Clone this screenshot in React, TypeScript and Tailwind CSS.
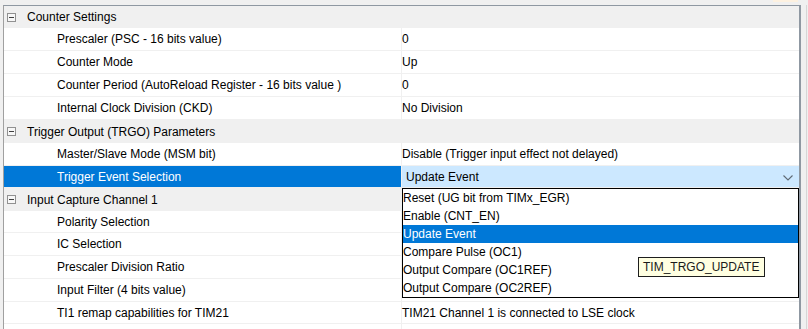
import React from "react";

type Row =
  | { kind: "h"; label: string; h: string }
  | { kind: "p"; label: string; value: string; h: string }
  | { kind: "sel"; label: string; value: string; h: string };

const rows: Row[] = [
  { kind: "h", label: "Counter Settings", h: "h-[22px]" },
  { kind: "p", label: "Prescaler (PSC - 16 bits value)", value: "0", h: "h-[23px]" },
  { kind: "p", label: "Counter Mode", value: "Up", h: "h-[23px]" },
  { kind: "p", label: "Counter Period (AutoReload Register - 16 bits value )", value: "0", h: "h-[23px]" },
  { kind: "p", label: "Internal Clock Division (CKD)", value: "No Division", h: "h-[23px]" },
  { kind: "h", label: "Trigger Output (TRGO) Parameters", h: "h-[23px]" },
  { kind: "p", label: "Master/Slave Mode (MSM bit)", value: "Disable (Trigger input effect not delayed)", h: "h-[23px]" },
  { kind: "sel", label: "Trigger Event Selection", value: "Update Event", h: "h-[22px]" },
  { kind: "h", label: "Input Capture Channel 1", h: "h-[23px]" },
  { kind: "p", label: "Polarity Selection", value: "", h: "h-[22px]" },
  { kind: "p", label: "IC Selection", value: "", h: "h-[23px]" },
  { kind: "p", label: "Prescaler Division Ratio", value: "", h: "h-[23px]" },
  { kind: "p", label: "Input Filter (4 bits value)", value: "", h: "h-[23px]" },
  { kind: "p", label: "TI1 remap capabilities for TIM21", value: "TIM21 Channel 1 is connected to LSE clock", h: "h-[22px]" },
  { kind: "p", label: "", value: "", h: "h-[23px]" },
];

const options = [
  "Reset (UG bit from TIMx_EGR)",
  "Enable (CNT_EN)",
  "Update Event",
  "Compare Pulse (OC1)",
  "Output Compare (OC1REF)",
  "Output Compare (OC2REF)",
];

function MinusBox() {
  return (
    <span className="ml-[3px] mr-[11px] flex h-[9px] w-[9px] items-center justify-center border border-[#919191] bg-[#f7f7f7]">
      <span className="h-px w-[5px] bg-[#404040]" />
    </span>
  );
}

export default function App() {
  return (
    <div
      className="relative h-[329px] w-[808px] overflow-hidden bg-[#f0f0f0] text-[12px] text-black"
      style={{ fontFamily: '"Liberation Sans", Arial, sans-serif' }}
    >
      <div className="absolute right-[10px] top-0 h-[2px] w-[25px] bg-[#fdf1e0]" />
      <div className="flex h-full pt-[5px]">
        <div className="ml-[3px] w-[798px] border-l border-t border-r-2 border-l-[#a0a0a0] border-t-[#8f98a2] border-r-[#8f98a2] bg-white">
          {rows.map((r, i) => {
            if (r.kind === "h") {
              return (
                <div key={i} className={`${r.h} flex items-center bg-[#f0f0f0]`}>
                  <MinusBox />
                  <span className="whitespace-nowrap">{r.label}</span>
                </div>
              );
            }
            if (r.kind === "sel") {
              return (
                <div key={i} className={`${r.h} flex border-b border-[#f0f0f0]`}>
                  <div className="flex w-[398px] items-center border-r border-[#f0f0f0] bg-[#0078d7] pl-[53px] text-white">
                    <span className="whitespace-nowrap">{r.label}</span>
                  </div>
                  <div className="flex flex-1 items-center justify-between bg-[#cce8ff] pl-[4px] pr-[6px]">
                    <span className="whitespace-nowrap">{r.value}</span>
                    <svg width="10" height="6" viewBox="0 0 10 6" className="mt-[2px]">
                      <path d="M0.5 0.5 L5 5 L9.5 0.5" fill="none" stroke="#5f6a74" strokeWidth="1.1" />
                    </svg>
                  </div>
                </div>
              );
            }
            return (
              <div key={i} className={`${r.h} flex border-b border-[#f0f0f0]`}>
                <div className="flex w-[398px] items-center border-r border-[#f0f0f0] pl-[53px]">
                  <span className="whitespace-nowrap">{r.label}</span>
                </div>
                <div className="flex flex-1 items-center pl-0">
                  <span className="whitespace-nowrap">{r.value}</span>
                </div>
              </div>
            );
          })}
        </div>
        <div className="ml-[5px] h-full w-px bg-[#d6d6d6]" />
      </div>

      {/* dropdown list */}
      <div className="absolute left-[402px] top-[188px] flex w-[397px] flex-col border border-black bg-white">
        {options.map((o, i) => (
          <div
            key={i}
            className={`flex h-[18px] items-center whitespace-nowrap pl-0 ${
              i === 2 ? "bg-[#0078d7] text-white" : "text-black"
            }`}
          >
            {o}
          </div>
        ))}
      </div>

      {/* tooltip */}
      <div className="absolute left-[638px] top-[257px] flex h-[20px] w-[127px] items-center border border-[#1e1e1e] bg-[#ffffe1] pl-[4px] text-[#1a1a1a]">
        TIM_TRGO_UPDATE
      </div>
    </div>
  );
}
